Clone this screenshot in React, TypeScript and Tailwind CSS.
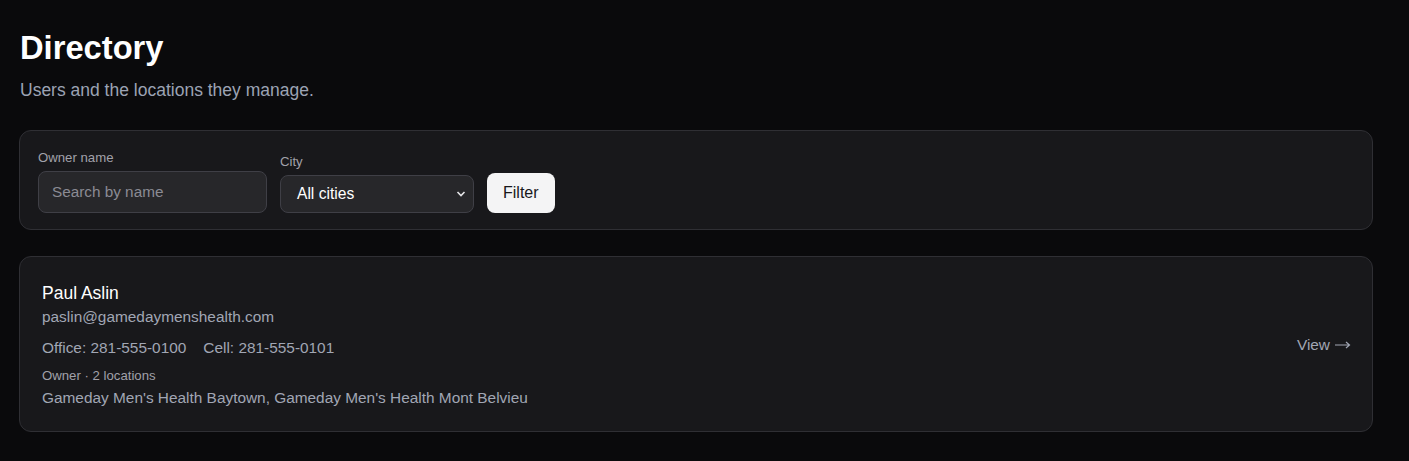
import React from "react";

export default function App() {
  return (
    <div className="min-h-[461px] bg-[#0a0a0c] pl-5 pr-[36px] pt-[28px] pb-6 font-['Liberation_Sans',Arial,sans-serif] text-white">
      <h1 className="text-[32.7px] font-bold leading-[40px]">Directory</h1>
      <p className="mt-[11px] text-[17.5px] leading-[22px] text-[#9ca3b4]">Users and the locations they manage.</p>

      <div className="-ml-px mt-[29px] rounded-xl border border-[#2f2f34] bg-[#18181b] px-[18px] pt-[19px] pb-[16px]">
        <div className="flex items-end gap-[13px]">
          <label className="flex flex-col">
            <span className="mb-[5px] text-[13.2px] leading-[16px] text-[#a1a1aa]">Owner name</span>
            <input
              placeholder="Search by name"
              className="h-[42px] w-[229px] rounded-lg border border-[#3f3f46] bg-[#27272a] px-[13px] text-[15.3px] text-white placeholder:text-[#8b8b94] outline-none"
            />
          </label>
          <label className="flex flex-col">
            <span className="mb-[5px] text-[13.2px] leading-[16px] text-[#a1a1aa]">City</span>
            <div className="relative h-[38px] w-[194px] rounded-lg border border-[#3f3f46] bg-[#27272a]">
              <span className="absolute left-[16px] top-[9px] text-[15.6px] leading-[18px] text-white">All cities</span>
              <svg className="absolute right-[7px] top-[14px]" width="10" height="8" viewBox="0 0 10 8" fill="none">
                <path d="M1.5 2l3.5 3.5L8.5 2" stroke="#e4e4e7" strokeWidth="1.6" />
              </svg>
            </div>
          </label>
          <button className="h-[40px] rounded-lg bg-[#f4f4f5] px-[16px] text-[16px] text-[#18181b]">Filter</button>
        </div>
      </div>

      <div className="-ml-px mt-[26px] flex items-center justify-between rounded-xl border border-[#2f2f34] bg-[#18181b] pl-[22px] pr-[21px] pt-[25px] pb-[23px]">
        <div>
          <div className="text-[17.5px] leading-[22px] text-white">Paul Aslin</div>
          <div className="mt-[3px] text-[15.4px] leading-[20px] text-[#a1a6b4]">paslin@gamedaymenshealth.com</div>
          <div className="mt-[11px] flex gap-[17px] text-[15.4px] leading-[20px] text-[#a1a6b4]">
            <span>Office: 281-555-0100</span>
            <span>Cell: 281-555-0101</span>
          </div>
          <div className="mt-[9px] text-[13.2px] leading-[17px] text-[#a1a1aa]">Owner · 2 locations</div>
          <div className="mt-[4px] text-[15.4px] leading-[20px] text-[#a1a6b4]">Gameday Men's Health Baytown, Gameday Men's Health Mont Belvieu</div>
        </div>
        <a className="flex items-center gap-[5px] text-[15.4px] leading-[20px] text-[#a1a6b4]">
          View
          <svg width="16" height="8" viewBox="0 0 16 8" fill="none">
            <path d="M0 4h14.5M11 1l3.5 3-3.5 3" stroke="#a1a6b4" strokeWidth="1.2" />
          </svg>
        </a>
      </div>
    </div>
  );
}
